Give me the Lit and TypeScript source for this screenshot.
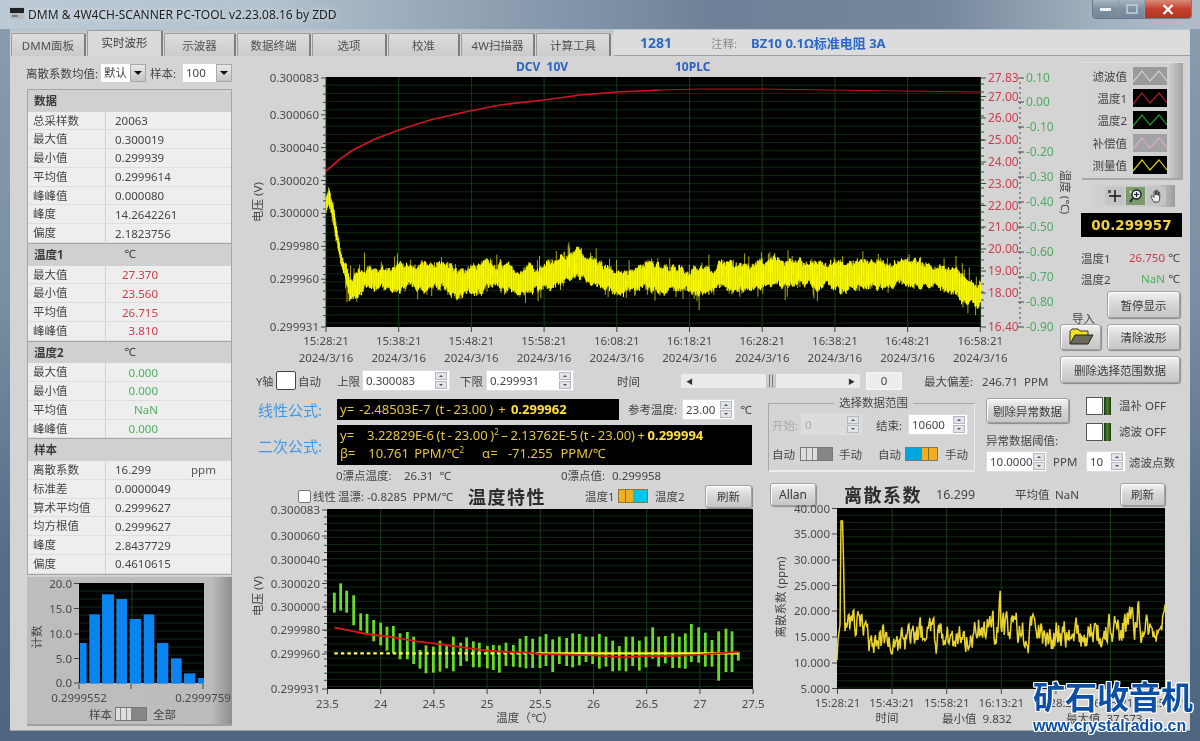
import { LitElement, html, css, svg } from 'lit'
import { customElement } from 'lit/decorators.js'

type Pt = [number, number]

const seeded = (seed: number) => () => {
  seed = (seed + 0x6d2b79f5) | 0
  let t = Math.imul(seed ^ (seed >>> 15), 1 | seed)
  t = (t + Math.imul(t ^ (t >>> 7), 61 | t)) ^ t
  return ((t ^ (t >>> 14)) >>> 0) / 4294967296
}

const lerp = (pts: Pt[], x: number) => {
  for (let i = 1; i < pts.length; i++) {
    if (x <= pts[i][0]) {
      const [x0, y0] = pts[i - 1]
      const [x1, y1] = pts[i]
      return y0 + ((y1 - y0) * (x - x0)) / (x1 - x0)
    }
  }
  return pts[pts.length - 1][1]
}

// page coordinates read off the screenshot
const RED_LEFT: Pt[] = [[326, 171], [340, 159], [353, 150], [375, 139], [399, 130], [430, 120], [465, 112], [500, 105], [544, 100], [580, 95], [618, 92], [660, 90]]
const RED_RIGHT: Pt[] = [[660, 90], [700, 89], [760, 89], [830, 90], [900, 91], [981, 92]]
const YELLOW_CENTER: Pt[] = [[326, 205], [329, 196], [335, 225], [342, 262], [350, 288], [356, 286], [365, 278], [400, 277], [440, 276], [458, 285], [470, 280], [495, 274], [520, 280], [560, 272], [577, 262], [590, 270], [620, 283], [650, 276], [690, 282], [720, 278], [770, 272], [830, 276], [870, 272], [920, 274], [945, 280], [965, 290], [978, 298], [981, 292]]

const mainWave = () => {
  const r = seeded(11)
  let core = ''
  let spikes = ''
  let drift = 0
  let lumpUp = 0
  let lumpDown = 0
  for (let x = 326; x <= 981; x += 0.7) {
    drift = drift * 0.985 + (r() - 0.5) * 0.9
    lumpUp = lumpUp * 0.8 + (r() - 0.5) * 5
    lumpDown = lumpDown * 0.8 + (r() - 0.5) * 5
    const c = lerp(YELLOW_CENTER, x) + drift
    const wide = x < 345 ? 0.6 : 1
    const up = Math.max(4, 10 + lumpUp + r() * 3) * wide
    const down = Math.max(4, 10 + lumpDown + r() * 3) * wide
    const px = x.toFixed(1)
    core += `M${px} ${(c - up).toFixed(1)}V${Math.min(326, c + down).toFixed(1)}`
    if (r() < 0.16) {
      const reach = (14 + r() * r() * 17) * wide
      const end = Math.min(326, c + (r() < 0.5 ? -reach : reach))
      spikes += `M${px} ${c.toFixed(1)}V${end.toFixed(1)}`
    }
  }
  return { core, spikes }
}

const allanWave = () => {
  const r = seeded(23)
  const pts: string[] = ['837,660', '838,640', '840,625', '841,521', '842.5,521', '843.5,560', '844.5,612']
  let fast = 0
  let slow = 0
  const bumps: Pt[] = [[845, 2.5], [860, 1], [872, -1.5], [906, -1], [907, -3], [908, 0], [985, 0], [990, 3], [995, 0], [999, 1], [1000, 7], [1001, 1], [1005, 0], [1135, 0], [1138, 4], [1141, 0], [1165, 1]]
  for (let x = 845; x <= 1165; x += 0.8) {
    fast = fast * 0.5 + (r() - 0.5) * 5.2
    slow = slow * 0.97 + (r() - 0.5) * 0.42
    const v = 16 + fast + slow + lerp(bumps, x)
    const y = 689 - (Math.min(24, Math.max(11.8, v)) - 5) * 5.17
    pts.push(`${x.toFixed(1)},${y.toFixed(1)}`)
  }
  return pts.join(' ')
}

const MAIN_WAVE = mainWave()
const ALLAN_WAVE = allanWave()
const toLine = (pts: Pt[]) => pts.map((p) => p.join(',')).join(' ')

// [x, top, bottom] in 3x crop coordinates of the temperature plot
const TEMP_BARS: number[][] = [[253, 278, 338], [272, 250, 332], [290, 272, 338], [311, 286, 376], [332, 340, 392], [351, 342, 400], [371, 360, 424], [392, 368, 436], [411, 380, 452], [430, 378, 460], [450, 400, 478], [472, 396, 478], [491, 410, 492], [510, 450, 506], [528, 436, 520], [550, 440, 518], [570, 422, 515], [590, 435, 505], [610, 410, 514], [632, 428, 498], [650, 412, 484], [670, 424, 502], [688, 428, 502], [712, 438, 505], [730, 435, 510], [748, 436, 518], [768, 428, 498], [790, 435, 500], [810, 416, 502], [828, 408, 505], [848, 416, 504], [870, 410, 504], [888, 402, 498], [908, 418, 516], [928, 410, 492], [950, 414, 498], [968, 400, 502], [988, 402, 496], [1008, 410, 486], [1028, 410, 492], [1048, 402, 506], [1068, 410, 500], [1088, 422, 514], [1108, 438, 512], [1128, 410, 514], [1148, 410, 498], [1168, 422, 512], [1188, 410, 502], [1208, 382, 476], [1226, 410, 500], [1246, 408, 490], [1268, 400, 504], [1288, 410, 504], [1306, 400, 506], [1324, 372, 486], [1346, 382, 488], [1366, 398, 500], [1386, 420, 500], [1406, 394, 542], [1428, 386, 516], [1446, 394, 516], [1465, 456, 482]]
const TEMP_RED: Pt[] = [[253, 382], [300, 392], [350, 402], [400, 408], [450, 415], [500, 424], [550, 430], [610, 438], [660, 445], [712, 452], [770, 456], [830, 458], [870, 462], [1030, 466], [1125, 472], [1180, 468], [1270, 468], [1350, 464], [1400, 460], [1465, 456]]
const HIST_BARS: number[][] = [[240, 260, 462], [268, 300, 376], [306, 342, 316], [349, 381, 330], [389, 423, 390], [431, 463, 376], [471, 505, 462], [513, 545, 508], [552, 586, 553], [594, 612, 567]]

const TABS: [string, number][] = [['DMM面板', 75], ['实时波形', 76], ['示波器', 72], ['数据终端', 74], ['选项', 75], ['校准', 72], ['4W扫描器', 74], ['计算工具', 75]]

type Row = [string, string]
type Section = { title: string; unit?: string; tone?: string; rows: Row[] }
const SECTIONS: Section[] = [
  { title: '数据', rows: [['总采样数', '20063'], ['最大值', '0.300019'], ['最小值', '0.299939'], ['平均值', '0.2999614'], ['峰峰值', '0.000080'], ['峰度', '14.2642261'], ['偏度', '2.1823756']] },
  { title: '温度1', unit: '℃', tone: 'red', rows: [['最大值', '27.370'], ['最小值', '23.560'], ['平均值', '26.715'], ['峰峰值', '3.810']] },
  { title: '温度2', unit: '℃', tone: 'green', rows: [['最大值', '0.000'], ['最小值', '0.000'], ['平均值', 'NaN'], ['峰峰值', '0.000']] },
  { title: '样本', rows: [['离散系数', '16.299'], ['标准差', '0.0000049'], ['算术平均值', '0.2999627'], ['均方根值', '0.2999627'], ['峰度', '2.8437729'], ['偏度', '0.4610615']] }
]

const LEGEND: [string, string, string][] = [
  ['滤波值', '#9a9a9a', '#c8d0d0'],
  ['温度1', '#000', '#b01a22'],
  ['温度2', '#000', '#1e9c28'],
  ['补偿值', '#a3a3a3', '#d8a8d0'],
  ['测量值', '#000', '#d8cc20']
]

const plotBg = (x: number, y: number, w: number, h: number, vx: number[], step: number) => {
  const lines: number[] = []
  for (let v = y + step; v < y + h; v += step) lines.push(v)
  return svg`
    <rect x=${x} y=${y} width=${w} height=${h} fill="#000"></rect>
    ${lines.map((v) => svg`<line class="grid-h" x1=${x} x2=${x + w} y1=${v} y2=${v}></line>`)}
    ${vx.map((v) => svg`<line class="grid-v" x1=${v} x2=${v} y1=${y} y2=${y + h}></line>`)}
  `
}

const yTicks = (x: number, ticks: [string, number][], minor: number[], cls = 'tick') => svg`
  ${ticks.map(([t, y]) => svg`
    <text class=${cls} x=${x - 7} y=${y + 4} text-anchor="end">${t}</text>
    <line class="mark" x1=${x - 5} x2=${x} y1=${y} y2=${y}></line>`)}
  ${minor.map((y) => svg`<line class="mark" x1=${x - 3} x2=${x} y1=${y} y2=${y}></line>`)}
`

const steps = (from: number, to: number, step: number) => {
  const out: number[] = []
  for (let v = from; v <= to; v += step) out.push(v)
  return out
}

@customElement('app-root')
export class AppRoot extends LitElement {
  static styles = css`
    :host {
      display: block;
      width: 1200px;
      height: 741px;
      font-family: "Noto Sans", "Noto Sans CJK SC", sans-serif;
      font-size: 11.5px;
      color: #454545;
    }
    * { box-sizing: border-box; }

    .window {
      position: relative;
      width: 1200px;
      height: 741px;
      overflow: hidden;
      display: flex;
      flex-direction: column;
      filter: blur(0.3px);
      background: linear-gradient(180deg, #8b9daf 0, #7a8ea3 40%, #566d86 75%, #4e6680 100%);
    }
    .titlebar {
      height: 29px;
      flex: none;
      display: flex;
      align-items: flex-start;
      padding: 7px 0 0 10px;
      gap: 4px;
      background: linear-gradient(90deg, #bccad6 0, #b3c2cf 22%, #93a5b6 38%, #6d8097 60%, #74879c 78%, #a3b2c0 92%, #b0bdc9 100%);
    }
    .title {
      font-size: 12px;
      line-height: 16px;
      color: #1e1e1e;
      text-shadow: 0 0 6px rgba(255, 255, 255, 0.8);
    }
    .winbtns {
      position: absolute;
      top: 0;
      right: 8px;
      display: flex;
      height: 19px;
      border: 1px solid #6b7b8c;
      border-top: none;
      border-radius: 0 0 4px 4px;
      overflow: hidden;
    }
    .winbtn {
      width: 26px;
      display: flex;
      align-items: center;
      justify-content: center;
      background: linear-gradient(180deg, #a9b6c2, #7e8fa1 50%, #74879a);
      border-right: 1px solid #8897a6;
    }
    .winbtn.close {
      width: 46px;
      border: none;
      background: linear-gradient(180deg, #d88a78, #c4402c 50%, #b23424);
    }

    .client {
      flex: none;
      width: 1180px;
      height: 701px;
      margin-left: 10px;
      display: flex;
      flex-direction: column;
    }
    .tabbar {
      height: 27px;
      flex: none;
      display: flex;
      align-items: flex-end;
      gap: 1px;
      padding-left: 1px;
      background: linear-gradient(180deg, #b5c0c9, #d5d8da 30%);
    }
    .tab {
      height: 23px;
      display: flex;
      align-items: center;
      justify-content: center;
      background: linear-gradient(180deg, #dcdcdc, #cbcbcb);
      border: 1px solid #9c9c9c;
      border-bottom: none;
      border-right: 2px solid #7e7e7e;
      border-radius: 2px 2px 0 0;
      font-size: 11.5px;
      color: #505050;
    }
    .tab.active {
      height: 26px;
      background: #dadada;
      color: #3c3c3c;
      padding-bottom: 3px;
    }
    .status {
      flex: 1;
      height: 26px;
      margin-left: 2px;
      background: #dcdcdc;
      border-bottom: 1px solid #9f9f9f;
      display: grid;
      grid-template-columns: 26px 71px 40px 1fr;
      align-items: center;
      font-weight: 700;
      color: #2a68c8;
      font-size: 13px;
    }
    .status .num { grid-column: 2; font-size: 14px; }
    .status .note { color: #8b8b8b; font-weight: 400; font-size: 11.5px; }

    .panel {
      flex: 1;
      display: flex;
      padding-top: 6px;
      background: #d4d4d4;
      border-bottom: 1px solid #9aa4ad;
    }
    .left-col {
      width: 207px;
      margin-left: 16px;
      flex: none;
    }
    .rest {
      width: 935px;
      margin-left: 17px;
      flex: none;
    }

    .combos {
      margin-top: 2px;
      height: 18px;
      display: grid;
      grid-template-columns: 75px 45px 37px 49px;
      align-items: center;
    }
    .combos .pad { padding-left: 4px; }
    .combo {
      height: 18px;
      display: flex;
      background: #fff;
      padding-left: 3px;
      line-height: 18px;
      justify-content: space-between;
    }
    .combo-arrow {
      width: 16px;
      height: 18px;
      flex: none;
      border: 1px solid #a8a8a8;
      background: linear-gradient(180deg, #e8e8e8, #c4c4c4);
      display: flex;
      align-items: center;
      justify-content: center;
    }
    .combo-arrow::before {
      content: "";
      border: 4px solid transparent;
      border-top-color: #111;
      border-bottom: none;
    }

    .table {
      width: 205px;
      margin: 7px 0 0 1px;
      border: 1px solid #a5a5a5;
      background: #eee;
    }
    .sec-head {
      height: 22.5px;
      display: grid;
      grid-template-columns: 90px 1fr;
      align-items: center;
      background: #d0d0d0;
      padding: 0 0 2px 6px;
      font-weight: 700;
      color: #3c3c3c;
      border-top: 1px solid #a8a8a8;
    }
    .sec-head.first { border-top: none; height: 21.5px; }
    .sec-head .unit { font-weight: 400; padding-left: 0; }
    .row {
      height: 18.8px;
      display: grid;
      grid-template-columns: 78px 1fr 40px;
      align-items: center;
      background: #eeeeee;
      border-bottom: 1px solid #dedede;
    }
    .cell-label {
      padding-left: 5px;
      height: 100%;
      line-height: 17.7px;
      border-right: 1px solid #d2d2d2;
      white-space: nowrap;
    }
    .cell-value { padding-left: 9px; }
    .cell-value.red, .cell-value.green {
      padding: 0;
      width: 52px;
      text-align: right;
    }
    .red { color: #cf3a48; }
    .green { color: #4fae5c; }
    .cell-unit { color: #555; }

    .hist {
      width: 205px;
      height: 150px;
      margin: 1px 0 0 1px;
      background: linear-gradient(90deg, #bdbdbd 0, #bcbcbc 90%, #8f8f8f 100%);
      border-top: 1px solid #cfcfcf;
      border-bottom: 2px solid #a0a0a0;
    }
    .hist svg { display: block; overflow: visible; }
    .hist-switch {
      display: grid;
      grid-template-columns: 85px 32px 1fr;
      align-items: center;
      column-gap: 3px;
      height: 16px;
      margin-top: 3px;
    }
    .hist-switch span:first-child { text-align: right; }

    .chart { display: block; overflow: visible; }
    .grid-h { stroke: #0f2c10; stroke-width: 1; }
    .grid-v { stroke: #163e17; stroke-width: 1; }
    .mark { stroke: #444; stroke-width: 1; }
    .tick { font-size: 11.5px; fill: #4a4a4a; }
    .tick-red { font-size: 12px; fill: #cb3f4c; }
    .tick-green { font-size: 12px; fill: #4fa963; }
    .axis-label { font-size: 11.5px; fill: #444; white-space: pre; }
    .mode { font-size: 12px; font-weight: 700; fill: #2a62c4; white-space: pre; }

    .upper { display: flex; height: 328px; }
    .chart-col { width: 810px; flex: none; }
    .axis-row {
      height: 20px;
      display: grid;
      grid-template-columns: 6px 20px 20px 41px 25px 88px 36px 88px 107px 179px 42px 1fr;
      align-items: center;
      white-space: pre;
    }
    .axis-row .y { grid-column: 2; font-size: 11px; }
    .pl2 { padding-left: 2px; }
    .pl3 { padding-left: 3px; }
    .pl5 { padding-left: 5px; }
    .pl6 { padding-left: 6px; }
    .pl7 { padding-left: 7px; }
    .pl10 { padding-left: 10px; }
    .pl14 { padding-left: 14px; }
    .pl22 { padding-left: 22px; }
    .pl28 { padding-left: 28px; }
    .pl43 { padding-left: 43px; }
    .check {
      width: 20px;
      height: 19px;
      background: #fff;
      border: 1px solid #444;
      border-radius: 2px;
    }
    .check.small { width: 13px; height: 13px; border-color: #777; }
    .scroll {
      height: 14px;
      display: flex;
      align-items: center;
      justify-content: space-between;
      padding: 0 5px;
      background: #ebebeb;
      font-size: 7px;
      color: #333;
    }
    .thumb {
      width: 10px;
      height: 14px;
      background: repeating-linear-gradient(90deg, #cfcfcf 0 2px, #777 2px 3px);
      border: 1px solid #c4c4c4;
    }
    .box {
      margin-left: 6px;
      height: 18px;
      background: #ededed;
      border: 1px solid #f6f6f6;
      text-align: center;
      line-height: 16px;
    }

    .side-col { width: 123px; flex: none; }
    .legend {
      width: 101px;
      height: 118px;
      margin-left: 22px;
      padding: 2px 16px 2px 0;
      display: grid;
      grid-template-rows: repeat(5, 1fr);
      background: linear-gradient(90deg, #d4d4d4 0, #cfcfcf 86%, #a2a2a2 100%);
      border-top: 1px solid #e2e2e2;
      border-bottom: 2px solid #a8a8a8;
    }
    .legend-row {
      display: flex;
      align-items: center;
      justify-content: flex-end;
      gap: 6px;
      white-space: nowrap;
    }
    .legend-row svg { display: block; flex: none; }
    .tools {
      width: 82px;
      height: 22px;
      margin: 5px 0 0 33px;
      padding-left: 12px;
      display: flex;
      align-items: center;
      gap: 2px;
      background: linear-gradient(90deg, #d0d0d0 0, #c8c8c8 80%, #9c9c9c 100%);
    }
    .tool {
      width: 19px;
      height: 18px;
      display: flex;
      align-items: center;
      justify-content: center;
      background: #c4c4c4;
    }
    .tool.on { background: #7d9a6e; }
    .readout {
      width: 101px;
      height: 24px;
      margin: 6px 0 0 21px;
      background: #000;
      color: #f0d040;
      font-family: "DejaVu Sans", sans-serif;
      font-weight: 700;
      font-size: 13.5px;
      line-height: 24px;
      text-align: center;
    }
    .temps {
      margin: 10px 0 0 21px;
      display: grid;
      grid-template-columns: 47px 37px 1fr;
      grid-auto-rows: 21px;
      align-items: center;
    }
    .temps .red, .temps .green { text-align: right; }
    .temps .unit { padding-left: 3px; }
    .actions {
      margin-top: 2px;
      display: grid;
      grid-template-columns: 41px 73px;
      grid-template-rows: 27px 26px 27px;
      column-gap: 6px;
      row-gap: 6px;
    }
    .import-label { align-self: end; text-align: center; margin-bottom: -8px; padding-left: 6px; }
    .wide { grid-column: 1 / 3; width: 120px; }
    .btn {
      display: flex;
      align-items: center;
      justify-content: center;
      background: linear-gradient(180deg, #f2f2f2, #d8d8d8 45%, #c6c6c6);
      border: 1px solid #a2a2a2;
      border-radius: 3px;
      box-shadow: 1px 1px 1px #8a8a8a, inset 1px 1px 0 #fff;
      color: #3a3a3a;
      white-space: nowrap;
    }

    .lower { display: flex; }
    .lower-left { width: 510px; flex: none; }
    .lower-right { width: 417px; margin-left: 8px; flex: none; }
    .linear {
      margin-top: 8px;
      height: 22px;
      display: grid;
      grid-template-columns: 8px 79px 282px 63px 53px 1fr;
      align-items: center;
    }
    .quad {
      margin-top: 5px;
      height: 40px;
      display: grid;
      grid-template-columns: 8px 79px 415px;
      align-items: center;
    }
    .formula-name {
      grid-column: 2;
      font-size: 15px;
      color: #3f98e6;
    }
    .formula {
      background: #000;
      color: #e6c63c;
      font-size: 13px;
      line-height: 18px;
      white-space: pre;
      word-spacing: -0.8px;
      padding-left: 3px;
    }
    .linear .formula { height: 21px; line-height: 21px; }
    .quad .formula { height: 40px; padding-top: 1px; }
    .formula b { color: #ffe040; }
    .formula sup { font-size: 8px; line-height: 0; }
    .ref-label { padding-left: 9px; }
    .drift {
      margin-top: 2px;
      height: 16px;
      display: grid;
      grid-template-columns: 86px 68px 157px 51px 1fr;
      align-items: center;
      white-space: pre;
    }
    .drift span:first-child { grid-column: 2; }
    .tc-row {
      height: 22px;
      display: grid;
      grid-template-columns: 48px 13px 27px 130px 117px 33px 30px 57px 47px;
      align-items: center;
      white-space: pre;
    }
    .tc-row .check { grid-column: 2; }
    .tc-row .btn, .allan-row .btn { height: 23px; }
    .heading {
      font-size: 18px;
      font-weight: 700;
      letter-spacing: 1.5px;
      color: #2c2c2c;
      white-space: nowrap;
    }
    .switch {
      height: 14px;
      display: flex;
      border: 1px solid #777;
    }
    .switch i { display: block; flex: 1; }
    .switch .lt { background: linear-gradient(90deg, #dedede 0 30%, #888 30% 36%, #dedede 36% 66%, #888 66% 72%, #dedede 72%); }
    .switch .dk { background: #868686; }
    .switch .cy { background: #00a6de; }
    .switch .or { background: linear-gradient(90deg, #f2ae22 0 40%, #8a6a10 40% 48%, #f2ae22 48%); }
    .switch.c2 { height: 14px; border-color: #8a7a30; }
    .switch.c2 .cy { background: #00c6e8; }

    .ctl-top { display: flex; height: 91px; }
    fieldset.range {
      width: 207px;
      height: 76px;
      margin: 6px 0 0;
      padding: 4px 0 0 3px;
      border: 1px solid #a8a8a8;
      border-right-color: #ececec;
      border-bottom: 2px solid #ececec;
      flex: none;
    }
    fieldset.range legend {
      margin-left: 62px;
      padding: 0 5px;
      line-height: 14px;
    }
    .range-1 {
      height: 21px;
      display: grid;
      grid-template-columns: 29px 61px 46px 60px;
      align-items: center;
    }
    .range-2 {
      margin-top: 11px;
      height: 16px;
      display: grid;
      grid-template-columns: 28px 33px 45px 27px 33px 1fr;
      align-items: center;
    }
    .muted { color: #ababab; }
    .ctl {
      width: 194px;
      margin: 8px 0 0 11px;
      display: grid;
      grid-template-columns: 100px 1fr;
    }
    .ctl .btn { width: 83px; height: 25px; }
    .ctl-thr { margin-top: 11px; line-height: 14px; }
    .spin-row {
      margin-top: 3px;
      display: grid;
      grid-template-columns: 61px 1fr;
      column-gap: 6px;
      align-items: center;
    }
    .spin-row.filter { grid-template-columns: 40px 1fr; column-gap: 3px; margin-top: 10px; }
    .toggle-row {
      height: 18px;
      margin-bottom: 8px;
      display: grid;
      grid-template-columns: 17px 8px 1fr;
      align-items: stretch;
    }
    .toggle-row:first-child { margin-top: -1px; }
    .toggle-box { background: #fff; border: 1px solid #555; }
    .toggle-led { background: linear-gradient(90deg, #123a0c, #4e7c30, #123a0c); margin-left: 1px; }
    .toggle-row span:last-child { padding-left: 8px; line-height: 18px; }
    .allan-row {
      height: 23px;
      padding-left: 2px;
      display: grid;
      grid-template-columns: 46px 120px 79px 40px 65px 45px;
      align-items: center;
    }
    .allan-row .allan { font-size: 12px; }
    .allan-num { font-size: 12.5px; }

    .spin {
      height: 21px;
      display: flex;
      align-items: center;
      justify-content: space-between;
      background: #fff;
      border: 1px solid #ddd;
      padding: 0 2px 0 3px;
    }
    .spin.off { background: #dcdcdc; color: #aaa; }
    .arrows {
      width: 12px;
      height: 17px;
      flex: none;
      display: flex;
      flex-direction: column;
      gap: 1px;
    }
    .arrows i {
      flex: 1;
      display: flex;
      align-items: center;
      justify-content: center;
      background: #dfe3ea;
      border: 1px solid #b7b7bd;
    }
    .arrows i::before {
      content: "";
      border: 2.5px solid transparent;
      border-bottom-color: #555;
      border-top: none;
    }
    .arrows i + i::before {
      border-bottom: none;
      border-top: 2.5px solid #555;
    }

    .watermark {
      position: absolute;
      left: 1033px;
      top: 677px;
      width: 164px;
      color: #0c4fa6;
      font-weight: 700;
      white-space: nowrap;
      text-shadow: 1px 0 #fff, -1px 0 #fff, 0 1px #fff, 0 -1px #fff, 1px 1px #fff, -1px -1px #fff, 1px -1px #fff, -1px 1px #fff;
    }
    .wm-name { font-size: 32px; line-height: 40px; }
    .wm-url { font-family: "Liberation Sans", sans-serif; font-size: 15.8px; line-height: 18px; }
  `

  renderSpin (value: string, off = false) {
    return html`<div class="spin ${off ? 'off' : ''}"><span>${value}</span><span class="arrows"><i></i><i></i></span></div>`
  }

  renderSwitch (left: string, right: string, extra = '') {
    return html`<div class="switch ${extra}"><i class=${left}></i><i class=${right}></i></div>`
  }

  renderTable () {
    return html`
      <div class="table">
        ${SECTIONS.map((sec, i) => html`
          <div class="sec-head ${i === 0 ? 'first' : ''}">
            <span>${sec.title}</span><span class="unit">${sec.unit ?? ''}</span>
          </div>
          ${sec.rows.map(([k, v], j) => html`
            <div class="row">
              <span class="cell-label">${k}</span>
              <span class="cell-value ${sec.tone ?? ''}">${v}</span>
              <span class="cell-unit">${sec.title === '样本' && j === 0 ? 'ppm' : ''}</span>
            </div>
          `)}
        `)}
      </div>
    `
  }

  renderHistogram () {
    const bx = (v: number) => v / 3 - 27
    const by = (v: number) => (v - 270) / 3
    const ticks: [string, number][] = [['20.0', 4.5], ['15.0', 29.5], ['10.0', 55], ['5.0', 79.5], ['0.0', 104]]
    return html`
      <div class="hist">
        <svg width="205" height="126" viewBox="0 -2 205 126">
          ${plotBg(52, 4, 125, 100, [105], 8)}
          ${HIST_BARS.map(([a, b, top]) => svg`<rect x=${bx(a)} y=${by(top)} width=${(b - a) / 3} height=${by(584) - by(top)} fill="#0a84ee"></rect>`)}
          ${yTicks(52, ticks, [])}
          <line class="mark" x1="52" x2="52" y1="105" y2="110"></line>
          <line class="mark" x1="104" x2="104" y1="105" y2="110"></line>
          <line class="mark" x1="176" x2="176" y1="105" y2="110"></line>
          <text class="tick" x="52" y="123" text-anchor="middle">0.2999552</text>
          <text class="tick" x="176" y="123" text-anchor="middle">0.2999759</text>
          <text class="axis-label" transform="translate(14 58) rotate(-90)" text-anchor="middle">计数</text>
        </svg>
        <div class="hist-switch">
          <span>样本</span>
          ${this.renderSwitch('lt', 'dk')}
          <span class="pl3">全部</span>
        </div>
      </div>
    `
  }

  renderMainChart () {
    const xs = steps(0, 9, 1).map((i) => 326 + i * 72.7)
    const stamps = ['15:28:21', '15:38:21', '15:48:21', '15:58:21', '16:08:21', '16:18:21', '16:28:21', '16:38:21', '16:48:21', '16:58:21']
    const left: [string, number][] = [['0.300083', 78], ['0.300060', 114.8], ['0.300040', 147.6], ['0.300020', 180.5], ['0.300000', 213.4], ['0.299980', 246.3], ['0.299960', 279.2], ['0.299931', 327]]
    const red: [string, number][] = [['27.83', 78], ['27.00', 96.5], ['26.00', 118], ['25.00', 140], ['24.00', 162], ['23.00', 183.5], ['22.00', 205.5], ['21.00', 227], ['20.00', 249], ['19.00', 271], ['18.00', 293], ['16.40', 327]]
    const green: [string, number][] = [['0.10', 78], ['0.00', 102], ['-0.10', 127], ['-0.20', 152], ['-0.30', 177], ['-0.40', 202], ['-0.50', 227], ['-0.60', 252], ['-0.70', 277], ['-0.80', 302], ['-0.90', 327]]
    return html`
      <svg class="chart" width="810" height="308" viewBox="250 62 810 308">
        <text class="mode" x="516" y="71">DCV  10V</text>
        <text class="mode" x="675" y="71">10PLC</text>
        ${plotBg(326, 77, 655, 250, xs, 8.2)}
        <path d=${MAIN_WAVE.spikes} fill="none" stroke="#d4cc1c" stroke-width="0.8"></path>
        <path d=${MAIN_WAVE.core} fill="none" stroke="#ffff00" stroke-width="1"></path>
        <polyline points=${toLine(RED_LEFT)} fill="none" stroke="#cf1526" stroke-width="1.7"></polyline>
        <polyline points=${toLine(RED_RIGHT)} fill="none" stroke="#bc1420" stroke-width="1.2"></polyline>
        ${yTicks(326, left, steps(86, 320, 8.2))}
        ${xs.map((x, i) => svg`
          <line class="mark" x1=${x} x2=${x} y1="327" y2="332"></line>
          <text class="tick" x=${x} y="345" text-anchor="middle">${stamps[i]}</text>
          <text class="tick" x=${x} y="362" text-anchor="middle">2024/3/16</text>`)}
        ${red.map(([t, y]) => svg`
          <line class="mark" x1="981" x2="986" y1=${y} y2=${y}></line>
          <text class="tick-red" x="988" y=${y + 4}>${t}</text>`)}
        ${steps(84, 322, 8).map((y) => svg`<line class="mark" x1="981" x2="984" y1=${y} y2=${y}></line>`)}
        ${green.map(([t, y]) => svg`
          <line class="mark" x1="1018" x2="1024" y1=${y} y2=${y}></line>
          <text class="tick-green" x="1026" y=${y + 4}>${t}</text>`)}
        ${steps(83, 324, 5).map((y) => svg`<line class="mark" x1="1019" x2="1021" y1=${y} y2=${y}></line>`)}
        <text class="axis-label" transform="translate(262 202) rotate(-90)" text-anchor="middle">电压 (V)</text>
        <text class="axis-label" transform="translate(1061 192) rotate(90)" text-anchor="middle">温度 (℃)</text>
      </svg>
    `
  }

  renderTempChart () {
    const xs = steps(0, 8, 1).map((i) => 327.5 + i * 53.2)
    const labels = ['23.5', '24', '24.5', '25', '25.5', '26', '26.5', '27', '27.5']
    const ticks: [string, number][] = [['0.300083', 510], ['0.300060', 536], ['0.300040', 560], ['0.300020', 583.5], ['0.300000', 607], ['0.299980', 630], ['0.299960', 654], ['0.299931', 689]]
    const px = (v: number) => v / 3 + 250
    const py = (v: number) => v / 3 + 500
    const redLine = TEMP_RED.map(([x, y]) => `${px(x)},${py(y)}`).join(' ')
    return html`
      <svg class="chart" width="510" height="225" viewBox="250 505 510 225">
        ${plotBg(327, 509, 426, 180, xs.slice(1, -1), 7.1)}
        ${TEMP_BARS.map(([x, a, b]) => svg`<rect x=${px(x) - 1.4} y=${py(a)} width="2.8" height=${(b - a) / 3} fill="#66dc24"></rect>`)}
        <line x1=${px(253)} x2=${px(870)} y1=${py(460)} y2=${py(460)} stroke="#ffff50" stroke-width="2.4" stroke-dasharray="3.5 3"></line>
        <line x1=${px(870)} x2=${px(1465)} y1=${py(460)} y2=${py(460)} stroke="#ffff30" stroke-width="2.2"></line>
        <polyline points=${redLine} fill="none" stroke="#d81818" stroke-width="1.8"></polyline>
        ${yTicks(327, ticks, steps(517, 684, 7.1))}
        ${xs.map((x, i) => svg`
          <line class="mark" x1=${x} x2=${x} y1="689" y2="694"></line>
          <text class="tick" x=${x} y="708" text-anchor="middle">${labels[i]}</text>`)}
        <text class="axis-label" x="525" y="722" text-anchor="middle">温度（℃）</text>
        <text class="axis-label" transform="translate(262 596) rotate(-90)" text-anchor="middle">电压 (V)</text>
      </svg>
    `
  }

  renderAllanChart () {
    const xs = steps(0, 6, 1).map((i) => 837.5 + i * 54.6)
    const stamps = ['15:28:21', '15:43:21', '15:58:21', '16:13:21', '16:28:21', '16:43:21', '16:58:21']
    const ticks: [string, number][] = [['40.000', 508.5], ['35.000', 534], ['30.000', 560], ['25.000', 585.5], ['20.000', 611], ['15.000', 637], ['10.000', 663], ['5.000', 688.5]]
    return html`
      <svg class="chart" width="417" height="226" viewBox="768 504 417 226">
        ${plotBg(837, 508, 328, 181, xs.slice(1, -1), 7.2)}
        <polyline points=${ALLAN_WAVE} fill="none" stroke="#e9d32e" stroke-width="1.5"></polyline>
        ${yTicks(837, ticks, [])}
        ${xs.map((x, i) => svg`
          <line class="mark" x1=${x} x2=${x} y1="689" y2="694"></line>
          <text class="tick" x=${x} y="707" text-anchor="middle">${stamps[i]}</text>`)}
        <text class="axis-label" x="887" y="722" text-anchor="middle">时间</text>
        <text class="axis-label" x="942" y="723">最小值  9.832</text>
        <text class="axis-label" x="1066" y="723">最大值  37.573</text>
        <text class="axis-label" transform="translate(785 597) rotate(-90)" text-anchor="middle">离散系数 (ppm)</text>
      </svg>
    `
  }

  renderTools () {
    return html`
      <div class="tools">
        <span class="tool">
          <svg width="16" height="16" viewBox="0 0 16 16"><path d="M8 2v12M2 8h12" stroke="#111" stroke-width="1.4"/><rect x="1" y="2" width="3" height="3" fill="#555"/></svg>
        </span>
        <span class="tool on">
          <svg width="16" height="16" viewBox="0 0 16 16"><circle cx="8.5" cy="6.5" r="4.5" fill="#e8eef0" stroke="#222" stroke-width="1.4"/><path d="M6 6.5h5M8.5 4v5" stroke="#223" stroke-width="1.2"/><path d="M5 10l-3 4" stroke="#222" stroke-width="1.8"/><path d="M1 4h3M2.5 2.500v3" stroke="#cfe8b0"/></svg>
        </span>
        <span class="tool">
          <svg width="16" height="16" viewBox="0 0 16 16"><path d="M5 14C3.500 12 2 9.500 2 8.200c0-.8 1-.9 1.500-.2L5 9.500V4c0-1 1.400-1 1.400 0v3V2.800c0-1 1.500-1 1.500 0V7 3.400c0-1 1.400-1 1.400 0V7.500 5c0-1 1.400-1 1.400 0v5c0 2-.7 3-1.200 4z" fill="#eee" stroke="#333" stroke-width="0.9"/></svg>
        </span>
      </div>
    `
  }

  renderSide () {
    return html`
      <div class="side-col">
        <div class="legend">
          ${LEGEND.map(([name, bg, line]) => html`
            <div class="legend-row">
              <span>${name}</span>
              <svg width="34" height="18" viewBox="0 0 34 18">
                <rect width="34" height="18" fill=${bg}></rect>
                <path d="M0 15L9 4l8 10 9-10 8 10" fill="none" stroke=${line} stroke-width="1.2"></path>
              </svg>
            </div>
          `)}
        </div>
        ${this.renderTools()}
        <div class="readout">00.299957</div>
        <div class="temps">
          <span>温度1</span><span class="red">26.750</span><span class="unit">℃</span>
          <span>温度2</span><span class="green">NaN</span><span class="unit">℃</span>
        </div>
        <div class="actions">
          <span class="import-label">导入</span>
          <div class="btn">暂停显示</div>
          <div class="btn">
            <svg width="26" height="20" viewBox="0 0 26 20">
              <path d="M2 17V4l2-2h6l2 2h8v4" fill="#f2e020" stroke="#333"/>
              <path d="M2 17l5-9h18l-5 9z" fill="#6a6a5a" stroke="#222"/>
            </svg>
          </div>
          <div class="btn">清除波形</div>
          <div class="btn wide">删除选择范围数据</div>
        </div>
      </div>
    `
  }

  renderFormulas () {
    return html`
      <div class="linear">
        <span class="formula-name">线性公式:</span>
        <div class="formula">y=  -2.48503E-7  (t - 23.00 )  +  <b>0.299962</b></div>
        <span class="ref-label">参考温度:</span>
        ${this.renderSpin('23.00')}
        <span class="pl5">℃</span>
      </div>
      <div class="quad">
        <span class="formula-name">二次公式:</span>
        <div class="formula">y=     3.22829E-6 (t - 23.00 )<sup>2</sup> – 2.13762E-5 (t - 23.00) + <b>0.299994</b>
β=     10.761  PPM/℃<sup>2</sup>       α=    -71.255   PPM/℃</div>
      </div>
      <div class="drift">
        <span>0漂点温度:</span><span>26.31  ℃</span><span>0漂点值:</span><span>0.299958</span>
      </div>
      <div class="tc-row">
        <div class="check small"></div>
        <span class="pl2">线性</span>
        <span>温漂: -0.8285  PPM/℃</span>
        <span class="heading">温度特性</span>
        <span>温度1</span>
        ${this.renderSwitch('or', 'cy', 'c2')}
        <span class="pl7">温度2</span>
        <div class="btn">刷新</div>
      </div>
    `
  }

  renderRange () {
    return html`
      <fieldset class="range">
        <legend>选择数据范围</legend>
        <div class="range-1">
          <span class="muted">开始:</span>
          ${this.renderSpin('0', true)}
          <span class="pl14">结束:</span>
          ${this.renderSpin('10600')}
        </div>
        <div class="range-2">
          <span>自动</span>
          ${this.renderSwitch('lt', 'dk')}
          <span class="pl6">手动</span>
          <span>自动</span>
          ${this.renderSwitch('cy', 'or')}
          <span class="pl7">手动</span>
        </div>
      </fieldset>
    `
  }

  renderControls () {
    return html`
      <div class="ctl">
        <div>
          <div class="btn">剔除异常数据</div>
          <div class="ctl-thr">异常数据阈值:</div>
          <div class="spin-row">${this.renderSpin('10.0000')}<span>PPM</span></div>
        </div>
        <div>
          <div class="toggle-row"><span class="toggle-box"></span><span class="toggle-led"></span><span>温补 OFF</span></div>
          <div class="toggle-row"><span class="toggle-box"></span><span class="toggle-led"></span><span>滤波 OFF</span></div>
          <div class="spin-row filter">${this.renderSpin('10')}<span>滤波点数</span></div>
        </div>
      </div>
    `
  }

  render () {
    return html`
      <div class="window">
        <div class="titlebar">
          <svg width="14" height="12" viewBox="0 0 14 12">
            <rect width="14" height="12" fill="#b8bcc0"></rect>
            <rect y="1" width="14" height="5" fill="#222"></rect>
            <rect x="2" y="8" width="6" height="2" fill="#777"></rect>
          </svg>
          <span class="title">DMM &amp; 4W4CH-SCANNER PC-TOOL v2.23.08.16 by ZDD</span>
        </div>
        <div class="winbtns">
          <div class="winbtn"><svg width="12" height="6" viewBox="0 0 12 6"><rect y="2" width="11" height="3" fill="#eef2f5"></rect></svg></div>
          <div class="winbtn"><svg width="12" height="10" viewBox="0 0 12 10"><rect x="1" y="1" width="10" height="8" fill="none" stroke="#c6d0da" stroke-width="1.5"></rect></svg></div>
          <div class="winbtn close"><svg width="12" height="11" viewBox="0 0 12 11"><path d="M1.500 1l9 9m0-9l-9 9" stroke="#fff" stroke-width="2.4"></path></svg></div>
        </div>
        <div class="client">
          <div class="tabbar">
            ${TABS.map(([name, w], i) => html`<div class="tab ${i === 1 ? 'active' : ''}" style="width:${w}px">${name}</div>`)}
            <div class="status">
              <span class="num">1281</span>
              <span class="note">注释:</span>
              <span>BZ10 0.1Ω标准电阻 3A</span>
            </div>
          </div>
          <div class="panel">
            <div class="left-col">
              <div class="combos">
                <span>离散系数均值:</span>
                <div class="combo"><span>默认</span><span class="combo-arrow"></span></div>
                <span class="pad">样本:</span>
                <div class="combo"><span>100</span><span class="combo-arrow"></span></div>
              </div>
              ${this.renderTable()}
              ${this.renderHistogram()}
            </div>
            <div class="rest">
              <div class="upper">
                <div class="chart-col">
                  ${this.renderMainChart()}
                  <div class="axis-row">
                    <span class="y">Y轴</span>
                    <div class="check"></div>
                    <span class="pl2">自动</span>
                    <span>上限</span>
                    ${this.renderSpin('0.300083')}
                    <span class="pl10">下限</span>
                    ${this.renderSpin('0.299931')}
                    <span class="pl43">时间</span>
                    <div class="scroll"><span>◀</span><span class="thumb"></span><span>▶</span></div>
                    <div class="box">0</div>
                    <span class="pl22">最大偏差:   246.71  PPM</span>
                  </div>
                </div>
                ${this.renderSide()}
              </div>
              <div class="lower">
                <div class="lower-left">
                  ${this.renderFormulas()}
                  ${this.renderTempChart()}
                </div>
                <div class="lower-right">
                  <div class="ctl-top">
                    ${this.renderRange()}
                    ${this.renderControls()}
                  </div>
                  <div class="allan-row">
                    <div class="btn allan">Allan</div>
                    <span class="heading pl28">离散系数</span>
                    <span class="allan-num">16.299</span>
                    <span>平均值</span>
                    <span>NaN</span>
                    <div class="btn">刷新</div>
                  </div>
                  ${this.renderAllanChart()}
                </div>
              </div>
            </div>
          </div>
        </div>
        <div class="watermark">
          <div class="wm-name">矿石收音机</div>
          <div class="wm-url">www.crystalradio.cn</div>
        </div>
      </div>
    `
  }
}
